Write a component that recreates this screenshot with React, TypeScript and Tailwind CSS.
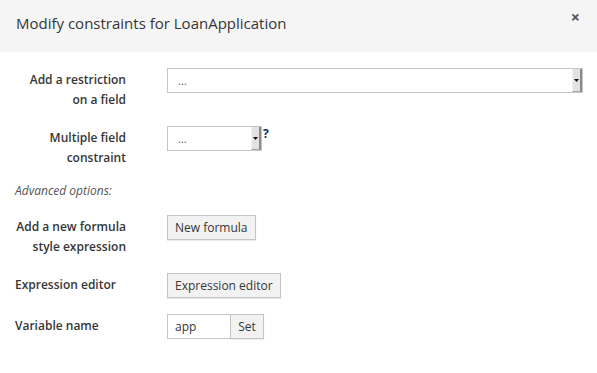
import React from "react";

const Arrow: React.FC = () => (
  <div className="flex w-[10px] h-full items-center justify-center bg-[#e2e2e2] border-l border-l-[#f4f4f4] border-r-2 border-r-[#8a8a8a] border-b border-b-[#a8a8a8]">
    <svg width="5" height="3" viewBox="0 0 5 3">
      <path d="M0 0h5L2.5 3z" fill="#111" />
    </svg>
  </div>
);

const Select: React.FC<{ width: string }> = ({ width }) => (
  <div className={`flex h-[25px] ${width} border border-[#c6c6c6] bg-white`}>
    <span className="flex-1 pl-[10px] pt-[3px] text-[11px] leading-[17px] text-[#555]">...</span>
    <Arrow />
  </div>
);

const Button: React.FC<{ label: string; className?: string }> = ({ label, className }) => (
  <button
    className={`h-[25px] border border-[#c4c4c4] bg-[#f2f2f2] px-[7px] text-[12px] leading-[23px] text-[#363636] shadow-[0_1px_1px_rgba(0,0,0,0.08)] ${className || ""}`}
  >
    {label}
  </button>
);

const Row: React.FC<{ label: React.ReactNode; left?: boolean; className?: string; children: React.ReactNode }> = ({
  label,
  left,
  className,
  children,
}) => (
  <div className={`flex items-start ${className || ""}`}>
    <div
      className={`w-[111px] mt-[2px] text-[12px] font-semibold leading-[20px] text-[#363636] ${left ? "text-left" : "text-right"}`}
    >
      {label}
    </div>
    <div className="ml-[41px] flex items-start">{children}</div>
  </div>
);

export default function App() {
  return (
    <div className="w-[597px] h-[373px] bg-white" style={{ fontFamily: '"Open Sans", sans-serif' }}>
      <div className="flex h-[52px] items-start justify-between bg-[#f5f5f5] pl-[16px] pr-[17px]">
        <h4 className="mt-[12px] text-[15px] leading-[22px] text-[#363636]">Modify constraints for LoanApplication</h4>
        <span className="mt-[7px] text-[16px] font-bold leading-[20px] text-[#555]">×</span>
      </div>

      <div className="pl-[15px] pt-[16px]">
        <Row label={<>Add a restriction<br />on a field</>}>
          <Select width="w-[416px]" />
        </Row>

        <Row label={<>Multiple field<br />constraint</>} className="mt-[16px]">
          <Select width="w-[95px]" />
          <span className="ml-[1px] text-[12px] font-bold leading-[16px] text-[#0f2f5f]">?</span>
        </Row>

        <div className="mt-[13px] text-[12px] italic leading-[20px] text-[#555]">Advanced options:</div>

        <Row label={<>Add a new formula<br />style expression</>} className="mt-[14px]">
          <Button label="New formula" />
        </Row>

        <Row label="Expression editor" left className="mt-[16px]">
          <Button label="Expression editor" />
        </Row>

        <Row label="Variable name" left className="mt-[16px]">
          <input
            readOnly
            value="app"
            className="h-[25px] w-[64px] border border-[#c6c6c6] bg-white pl-[7px] text-[12px] text-[#363636] outline-none"
          />
          <Button label="Set" className="w-[33px] px-0 border-l-0" />
        </Row>
      </div>
    </div>
  );
}
